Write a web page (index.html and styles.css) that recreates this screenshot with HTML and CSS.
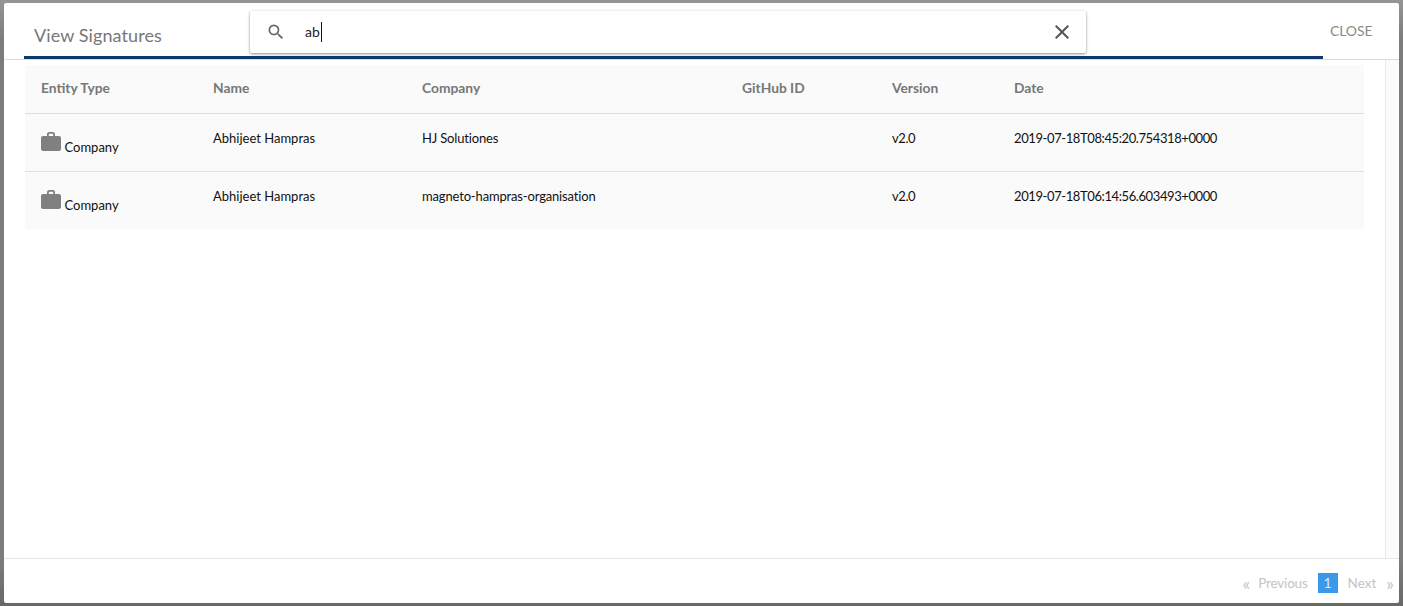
FILE: index.html
```html
<!DOCTYPE html>
<html lang="en">
<head>
<meta charset="utf-8">
<title>View Signatures</title>
<link rel="stylesheet" href="styles.css">
</head>
<body>
<div class="overlay">
  <div class="modal">
    <header class="modal-header">
      <div class="title-bar"><h1 class="title">View Signatures</h1></div>
      <button class="close">CLOSE</button>
      <div class="search">
        <svg class="search-icon" viewBox="0 0 24 24" width="20" height="20"><path d="M15.5 14h-.79l-.28-.27A6.47 6.47 0 0 0 16 9.5 6.5 6.5 0 1 0 9.5 16c1.61 0 3.09-.59 4.23-1.57l.27.28v.79l5 4.99L20.49 19l-4.99-5zm-6 0C7.01 14 5 11.99 5 9.5S7.01 5 9.5 5 14 7.01 14 9.5 11.99 14 9.5 14z"/></svg>
        <span class="search-value">ab</span>
        <svg class="clear-icon" viewBox="0 0 24 24" width="24" height="24"><path d="M19 6.41 17.59 5 12 10.59 6.41 5 5 6.41 10.59 12 5 17.59 6.41 19 12 13.41 17.59 19 19 17.59 13.41 12z"/></svg>
      </div>
    </header>
    <div class="modal-body">
      <div class="content">
        <table class="table">
          <thead>
            <tr><th class="c1">Entity Type</th><th class="c2">Name</th><th class="c3">Company</th><th class="c4">GitHub ID</th><th class="c5">Version</th><th>Date</th></tr>
          </thead>
          <tbody>
            <tr>
              <td><span class="entity"><svg class="case" viewBox="0 0 20 19" width="20" height="19"><path d="M6 4V2.200C6 1 7 0 8.200 0h3.600C13 0 14 1 14 2.200V4h4c1.100 0 2 .9 2 2v11c0 1.100-.9 2-2 2H2c-1.100 0-2-.9-2-2V6c0-1.100.9-2 2-2h4zm1.800 0h4.400V2.400c0-.4-.3-.7-.7-.7h-3c-.4 0-.7.3-.7.7V4z"/></svg>Company</span></td>
              <td>Abhijeet Hampras</td><td class="tight">HJ Solutiones</td><td></td><td class="num">v2.0</td><td class="num">2019-07-18T08:45:20.754318+0000</td>
            </tr>
            <tr>
              <td><span class="entity"><svg class="case" viewBox="0 0 20 19" width="20" height="19"><path d="M6 4V2.200C6 1 7 0 8.200 0h3.600C13 0 14 1 14 2.200V4h4c1.100 0 2 .9 2 2v11c0 1.100-.9 2-2 2H2c-1.100 0-2-.9-2-2V6c0-1.100.9-2 2-2h4zm1.800 0h4.400V2.400c0-.4-.3-.7-.7-.7h-3c-.4 0-.7.3-.7.7V4z"/></svg>Company</span></td>
              <td>Abhijeet Hampras</td><td class="tight">magneto-hampras-organisation</td><td></td><td class="num">v2.0</td><td class="num">2019-07-18T06:14:56.603493+0000</td>
            </tr>
          </tbody>
        </table>
      </div>
      <div class="scroll-track"></div>
    </div>
    <footer class="modal-footer">
      <nav class="pager">
        <span class="pager-arrow">«</span><span class="pager-word prev">Previous</span><span class="page-current">1</span><span class="pager-word next">Next</span><span class="pager-arrow">»</span>
      </nav>
    </footer>
  </div>
</div>
</body>
</html>
```
FILE: styles.css
```css
* { box-sizing: border-box; }
html, body { margin: 0; height: 100%; overflow: hidden; }
body { font-family: Lato, "Open Sans", sans-serif; color: #111; }
.overlay {
  width: 100%;
  height: 606px;
  padding: 3px 4px;
  background: linear-gradient(to bottom, #959595 0, #7c7c7c 40px, #7c7c7c 560px, #686868 100%);
}
.modal {
  height: 600px;
  background: #fff;
  border-radius: 2px;
  display: flex;
  flex-direction: column;
}
.modal-header {
  position: relative;
  height: 57px;
  flex: none;
  display: flex;
  border-bottom: 1px solid #dcdcdc;
}
.title-bar {
  width: 1299px;
  height: 56px;
  margin-left: 20px;
  padding: 19px 10px 0;
  border-bottom: 3px solid #0b3a6b;
}
.title {
  margin: 0;
  font-size: 18px;
  font-weight: 400;
  line-height: 26px;
  letter-spacing: .1px;
  color: #777;
}
.close {
  margin: 0 0 0 7px;
  padding: 16px 0 0;
  height: 40px;
  border: 0;
  background: none;
  font: 400 14px/20px Lato, sans-serif;
  letter-spacing: -.1px;
  color: #8a8a8a;
}
.search {
  position: absolute;
  left: 246px;
  top: 8px;
  width: 836px;
  height: 42px;
  display: flex;
  align-items: center;
  background: #fff;
  border-radius: 2px;
  box-shadow: 0 1px 3px rgba(0,0,0,.45);
}
.search-icon { margin-left: 15.500px; fill: #666; }
.search-value {
  margin-left: 19.500px;
  padding-right: 1px;
  border-right: 1px solid #111;
  font-size: 14px;
  line-height: 20px;
  color: #222;
}
.clear-icon { margin-left: auto; margin-right: 12px; fill: #555; }
.modal-body { flex: 1; display: flex; min-height: 0; }
.content { flex: 1; padding: 5px 21px 0 21px; }
.table {
  width: 1339px;
  border-collapse: collapse;
  table-layout: fixed;
  background: #fafafa;
  font-size: 13px;
}
.table th {
  height: 48px;
  padding: 0 16px 2px;
  text-align: left;
  font-weight: 700;
  font-size: 13.800px;
  color: #777;
  border-bottom: 1px solid #ddd;
}
.c1 { width: 172px; }
.c2 { width: 209px; }
.c3 { width: 320px; }
.c4 { width: 150px; }
.c5 { width: 122px; }
.table td {
  height: 58px;
  padding: 0 16px 8px;
  color: #111;
  border-bottom: 1px solid #e2e2e2;
}
.table tr:last-child td { border-bottom: 0; }
.table .tight { letter-spacing: -.16px; }
.table .num { letter-spacing: -.4px; }
.entity { display: inline-flex; align-items: flex-end; padding-top: 11px; margin-left: -.5px; }
.case { margin-right: 4px; fill: #808080; margin-bottom: 4px; }
.scroll-track {
  width: 14px;
  flex: none;
  background: #fbfbfb;
  border-left: 1px solid #e8e8e8;
}
.modal-footer {
  height: 45px;
  flex: none;
  border-top: 1px solid #e6e6e6;
  display: flex;
  justify-content: flex-end;
  align-items: flex-start;
  padding: 14px 5px 0 0;
}
.pager {
  display: flex;
  align-items: center;
  gap: 8px;
  font-size: 14px;
  line-height: 20px;
  color: #c4c4c4;
}
.pager-word { font-size: 13.500px; }
.prev { letter-spacing: -.2px; margin-right: 2px; }
.next { margin-right: 2px; }
.pager-arrow { font-size: 18px; line-height: 20px; }
.page-current {
  width: 20px;
  height: 20px;
  text-align: center;
  background: #3b99e8;
  color: #dcecfb;
  margin-right: 2px;
}
```
